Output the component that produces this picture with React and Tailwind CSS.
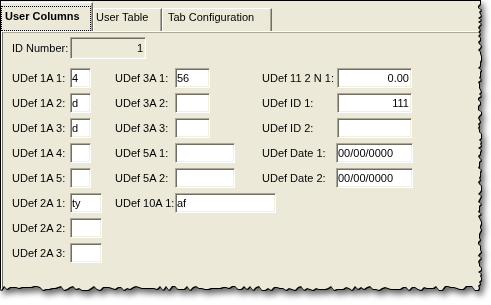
import React, { useMemo } from "react";

const font = { fontFamily: '"Liberation Sans", Arial, sans-serif' };

function Field({ w, h = "h-[20px]", value = "", right = false, disabled = false }) {
  return (
    <div
      className={`${w} ${h} flex items-center border border-t-[#aca899] border-l-[#aca899] border-r-white border-b-white shadow-[inset_1px_1px_0_#716f64,inset_-1px_-1px_0_#f1efe2] ${disabled ? "bg-[#ece9d8]" : "bg-white"} ${right ? "justify-end pr-[2px]" : "pl-[1px]"} text-[11px] leading-none text-black`}
    >
      {value}
    </div>
  );
}

function Label({ w, children }) {
  return <div className={`${w} text-[11px] leading-none text-black whitespace-nowrap`}>{children}</div>;
}

const rows = [
  { a: ["UDef 1A 1:", "w-[21px]", "4"], b: ["UDef 3A 1:", "w-[35px]", "56"], c: ["UDef 11 2 N 1:", "w-[75px]", "0.00", true] },
  { a: ["UDef 1A 2:", "w-[21px]", "d"], b: ["UDef 3A 2:", "w-[35px]", ""], c: ["UDef ID 1:", "w-[75px]", "111", true] },
  { a: ["UDef 1A 3:", "w-[21px]", "d"], b: ["UDef 3A 3:", "w-[35px]", ""], c: ["UDef ID 2:", "w-[75px]", ""] },
  { a: ["UDef 1A 4:", "w-[21px]", ""], b: ["UDef 5A 1:", "w-[60px]", ""], c: ["UDef Date 1:", "w-[77px]", "00/00/0000", false, true] },
  { a: ["UDef 1A 5:", "w-[21px]", ""], b: ["UDef 5A 2:", "w-[60px]", ""], c: ["UDef Date 2:", "w-[77px]", "00/00/0000", false, true] },
  { a: ["UDef 2A 1:", "w-[32px]", "ty"], b: ["UDef 10A 1:", "w-[101px]", "af"] },
  { a: ["UDef 2A 2:", "w-[32px]", ""] },
  { a: ["UDef 2A 3:", "w-[32px]", ""] },
];

function useTornEdge() {
  return useMemo(() => {
    let s = 17;
    const r = () => {
      s = (s * 1103515245 + 12345) % 2147483648;
      return s / 2147483648;
    };
    const pts = ["0px 0px", "480px 0px"];
    for (let y = 2; y <= 290; y += 2) pts.push(`${478 + Math.floor(r() * 4)}px ${y}px`);
    for (let x = 478; x >= 0; x -= 3) pts.push(`${x}px ${286 + Math.floor(r() * 5)}px`);
    pts.push("0px 288px");
    return `polygon(${pts.join(",")})`;
  }, []);
}

export default function App() {
  const clip = useTornEdge();

  return (
    <div className="w-[491px] h-[305px] bg-white overflow-hidden" style={font}>
      <div className="[filter:drop-shadow(1px_0_0_#000)_drop-shadow(0_1px_0_#000)_drop-shadow(3px_4px_3px_rgba(0,0,0,0.6))]">
        <div
          className="w-[484px] h-[296px] bg-[#ece9d8] border-t border-l border-black flex flex-col"
          style={{ clipPath: clip }}
        >
          {/* tabs */}
          <div className="h-[30px] flex items-end text-[11px] leading-[13px] text-black">
            <div className="relative h-[29px] w-[92px] border-t border-t-white border-r border-r-[#716f64] shadow-[inset_-1px_0_0_#aca899] pl-[4px] pt-[7px]">
              <div className="absolute left-[0px] right-[1px] top-[3px] bottom-0 border border-dotted border-black" />
              <span className="font-bold">User Columns</span>
            </div>
            <div className="h-[23px] w-[69px] border-t border-l border-white border-r border-r-[#716f64] shadow-[inset_-1px_0_0_#aca899] pl-[2px] pt-[2px]">
              <span>User Table</span>
            </div>
            <div className="h-[23px] w-[110px] border-t border-l border-white border-r border-r-[#716f64] shadow-[inset_-1px_0_0_#aca899] pl-[5px] pt-[2px]">
              <span>Tab Configuration</span>
            </div>
          </div>

          {/* panel */}
          <div className="flex-1 border-t border-t-white border-l border-l-white">
            <div className="h-full border-t border-t-[#aca899] border-l border-l-[#716f64] pl-[9px] pt-[4px] flex flex-col">
              <div className="flex items-center h-[22px]">
                <Label w="w-[58px]">ID Number:</Label>
                <Field w="w-[76px]" h="h-[22px]" value="1" right disabled />
              </div>
              <div className="flex flex-col gap-[5px] mt-[9px]">
                {rows.map((row, i) => (
                  <div key={i} className="flex items-center h-[20px]">
                    <Label w="w-[58px] shrink-0">{row.a[0]}</Label>
                    <div className="w-[45px] shrink-0">
                      <Field w={row.a[1]} value={row.a[2]} />
                    </div>
                    {row.b && (
                      <>
                        <Label w="w-[60px] shrink-0">{row.b[0]}</Label>
                        <div className="w-[87px] shrink-0">
                          <Field w={row.b[1]} value={row.b[2]} />
                        </div>
                      </>
                    )}
                    {row.c && (
                      <>
                        <Label w={row.c[4] ? "w-[74px] shrink-0" : "w-[75px] shrink-0"}>{row.c[0]}</Label>
                        <Field w={row.c[1]} value={row.c[2]} right={row.c[3]} />
                      </>
                    )}
                  </div>
                ))}
              </div>
            </div>
          </div>
        </div>
      </div>
    </div>
  );
}
